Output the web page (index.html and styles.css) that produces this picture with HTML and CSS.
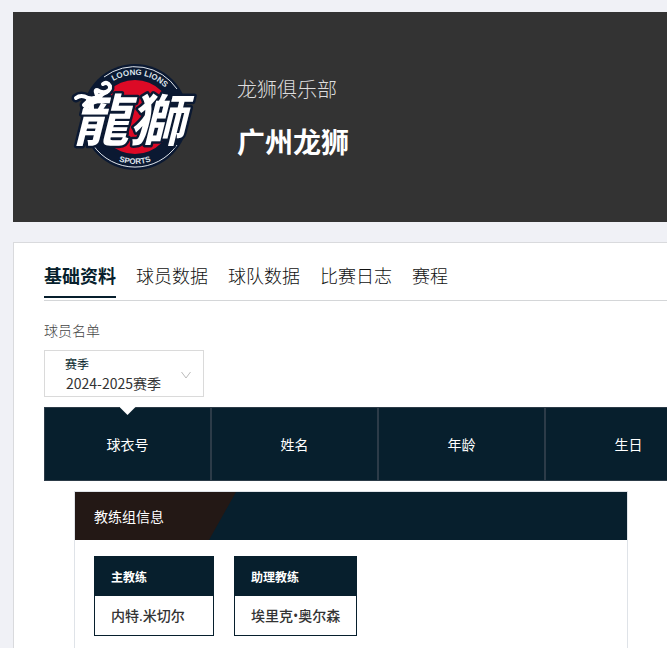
FILE: index.html
```html
<!DOCTYPE html>
<html lang="zh-CN">
<head>
<meta charset="utf-8">
<meta name="viewport" content="width=device-width, initial-scale=1">
<title>广州龙狮</title>
<link rel="stylesheet" href="styles.css">
</head>
<body>
<header class="hero">
  <svg class="logo" viewBox="8 7 130 110" role="img" aria-label="广州龙狮">
    <defs>
      <path id="arc-top" d="M33 62a42 42 0 0 1 84 0"/>
      <path id="arc-bottom" d="M28 62a47 47 0 0 0 94 0"/>
    </defs>
    <circle class="navy" cx="75" cy="62" r="53"/>
    <path class="ring" d="M44 22A51 51 0 0 1 117 34M33 90A51 51 0 0 0 117 90"/>
    <circle class="red" cx="75" cy="62" r="37"/>
    <g class="horns horns-edge">
      <path d="M25 54Q32 46 43 45"/>
      <path d="M16 43Q21 39 28 43Q36 45 43 39Q51 36 50 31Q47 26 43 29"/>
      <path d="M24 50Q30 44 38 42Q34 35 37 35Q43 39 48 36"/>
    </g>
    <text class="wordmark" x="13" y="86">龍獅</text>
    <g class="horns">
      <path d="M25 54Q32 46 43 45"/>
      <path d="M16 43Q21 39 28 43Q36 45 43 39Q51 36 50 31Q47 26 43 29"/>
      <path d="M24 50Q30 44 38 42Q34 35 37 35Q43 39 48 36"/>
    </g>
    <text class="motto"><textPath href="#arc-top" startOffset="54%">LOONG LIONS</textPath></text>
    <text class="motto"><textPath href="#arc-bottom" startOffset="50%">SPORTS</textPath></text>
  </svg>
  <div class="club">
    <p class="club-name">龙狮俱乐部</p>
    <h1 class="team-name">广州龙狮</h1>
  </div>
</header>

<main class="panel">
  <nav class="tabs">
    <a class="tab tab-active" href="#info" aria-current="page">基础资料</a>
    <a class="tab" href="#players">球员数据</a>
    <a class="tab" href="#team">球队数据</a>
    <a class="tab" href="#log">比赛日志</a>
    <a class="tab" href="#schedule">赛程</a>
  </nav>

  <h2 class="section-title">球员名单</h2>

  <div class="picker">
    <label class="picker-label" for="season">赛季</label>
    <select class="picker-select" id="season">
      <option>2024-2025赛季</option>
    </select>
    <svg class="picker-arrow" viewBox="0 0 10 8" aria-hidden="true"><path d="M.5 1L5 7L9.500 1"/></svg>
  </div>

  <div class="roster">
    <table class="roster-table">
      <thead>
        <tr>
          <th class="sorted" scope="col">球衣号</th>
          <th scope="col">姓名</th>
          <th scope="col">年龄</th>
          <th scope="col">生日</th>
        </tr>
      </thead>
    </table>
  </div>

  <section class="staff">
    <div class="staff-head">
      <h2 class="staff-title">教练组信息</h2>
    </div>
    <dl class="staff-list">
      <div class="coach">
        <dt class="coach-role">主教练</dt>
        <dd class="coach-name">内特.米切尔</dd>
      </div>
      <div class="coach">
        <dt class="coach-role">助理教练</dt>
        <dd class="coach-name">埃里克•奥尔森</dd>
      </div>
    </dl>
  </section>
</main>
</body>
</html>
```
FILE: styles.css
```css
* {
  box-sizing: border-box;
}

body {
  display: flex;
  flex-direction: column;
  gap: 20px;
  min-height: 100vh;
  margin: 0;
  padding: 12px 0 0 13px;
  overflow-x: hidden;
  background: #f0f1f6;
  color: #333;
  font-family: "Noto Sans CJK SC", sans-serif;
  font-size: 14px;
}

h1, h2, p, dl, dd {
  margin: 0;
}

.hero {
  display: flex;
  align-items: center;
  gap: 39px;
  padding: 50px 55px;
  background: #333;
}

.logo {
  flex: none;
  width: 130px;
  height: 110px;
}

.navy {
  fill: #0b1932;
}

.ring {
  fill: none;
  stroke: #dfe5ec;
  stroke-width: 1;
}

.red {
  fill: #dc0a26;
}

.motto {
  fill: #dfe5ec;
  font-family: "Liberation Sans", sans-serif;
  font-size: 8px;
  font-weight: bold;
  text-anchor: middle;
}

.wordmark {
  fill: #fff;
  stroke: #0b1932;
  stroke-width: 5;
  stroke-linejoin: round;
  paint-order: stroke;
  font-size: 56px;
  font-style: oblique;
  font-weight: 700;
}

.horns {
  fill: none;
  stroke: #fff;
  stroke-width: 4;
  stroke-linecap: round;
  stroke-linejoin: round;
}

.horns-edge {
  stroke: #0b1932;
  stroke-width: 9;
}

.club {
  display: flex;
  flex-direction: column;
  gap: 16px;
}

.club-name {
  color: #ddd;
  font-size: 20px;
  font-weight: 300;
  line-height: 32px;
}

.team-name {
  color: #fff;
  font-size: 28px;
  line-height: 40px;
}

.panel {
  display: flex;
  flex: 1;
  flex-direction: column;
  padding: 17px 0 0 30px;
  border: 1px solid #d9dadd;
  border-width: 1px 0 0 1px;
  background: #fff;
}

.tabs {
  display: flex;
  gap: 20px;
  padding-bottom: 2px;
  border-bottom: 1px solid #d4d6d8;
}

.tab {
  padding-bottom: 6px;
  border-bottom: 2px solid transparent;
  color: #111;
  font-size: 18px;
  font-weight: 300;
  line-height: 30px;
  text-decoration: none;
}

.tab-active {
  border-color: #071f2d;
  color: #071f2d;
  font-weight: 700;
}

.section-title {
  margin: 19px 0 10px;
  color: #444;
  font-size: 14px;
  font-weight: 300;
  line-height: 20px;
}

.picker {
  position: relative;
  display: flex;
  flex-direction: column;
  width: 160px;
  margin-bottom: 10px;
  padding: 3px 0;
  border: 1px solid #dadada;
}

.picker-label {
  padding-left: 20px;
  color: #071f2d;
  font-size: 12px;
  line-height: 19px;
}

.picker-select {
  width: 100%;
  height: 20px;
  padding: 0 0 0 21px;
  border: 0;
  appearance: none;
  background: none;
  color: #333;
  font: inherit;
  line-height: 20px;
}

.picker-arrow {
  position: absolute;
  top: 20px;
  right: 12px;
  width: 10px;
  height: 8px;
  fill: none;
  stroke: #bbb;
  pointer-events: none;
}

.roster {
  margin-bottom: 10px;
  overflow: hidden;
}

.roster-table {
  width: 669px;
  border-left: 1px solid #2c3b48;
  border-spacing: 0;
  table-layout: fixed;
}

.roster-table th {
  position: relative;
  height: 74px;
  padding: 0;
  border: 1px solid #2c3b48;
  border-width: 1px 2px 1px 0;
  background: #071f2d;
  color: #fff;
  font-weight: 400;
  text-align: center;
}

.sorted::before {
  content: "";
  position: absolute;
  top: -1px;
  left: calc(50% - 8px);
  width: 16px;
  height: 8px;
  background: #fff;
  clip-path: polygon(0 0, 100% 0, 50% 100%);
}

.staff {
  flex: 1;
  width: 554px;
  margin-left: 30px;
  border: 1px solid #dfe3e8;
  border-bottom: 0;
}

.staff-head {
  background: #071f2d;
}

.staff-title {
  width: 161px;
  padding-left: 19px;
  background: #231815;
  clip-path: polygon(0 0, 100% 0, calc(100% - 27px) 100%, 0 100%);
  color: #fff;
  font-size: 14px;
  font-weight: 400;
  line-height: 48px;
}

.staff-list {
  display: flex;
  gap: 20px;
  padding: 16px 19px 0;
}

.coach {
  min-width: 120px;
  border: 1px solid #071f2d;
}

.coach-role,
.coach-name {
  padding: 0 16px;
  line-height: 39px;
}

.coach-role {
  background: #071f2d;
  color: #fff;
  font-size: 12px;
  font-weight: 700;
}

.coach-name {
  font-family: "Open Sans", "Noto Sans CJK SC", sans-serif;
  font-weight: 500;
}
```
